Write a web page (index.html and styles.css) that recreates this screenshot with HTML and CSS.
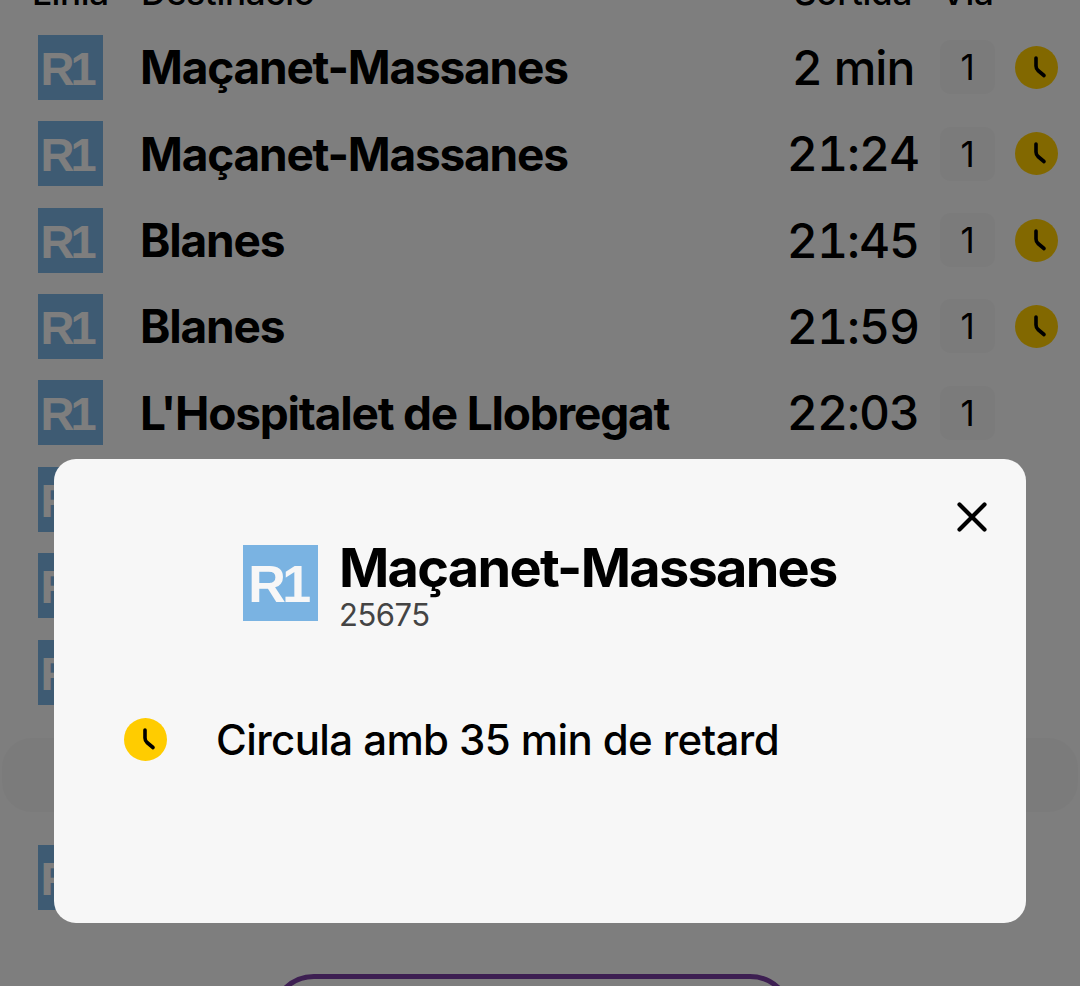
FILE: index.html
```html
<!DOCTYPE html>
<html lang="ca">
  <head>
    <meta charset="UTF-8" />
    <meta name="viewport" content="width=device-width, initial-scale=1.0" />
    <title>Sortides</title>
    <link rel="stylesheet" href="styles.css">
  </head>
  <body>
    <div id="container">
      <div id="head">
        <span class="col-line">Línia</span>
        <span class="col-dest">Destinació</span>
        <span class="col-time">Sortida</span>
        <span class="col-via">Via</span>
      </div>
      <div class="rows">
        <div class="row">
          <div class="badge">R1</div>
          <div class="dest">Maçanet-Massanes</div>
          <div class="time">2 min</div>
          <div class="via">1</div>
          <svg class="clock" viewBox="0 0 43 43"><circle cx="21.5" cy="21.5" r="21.5" fill="#ffcc00"/><path d="M21 12v8q0 2.5 2 4.5l6 5" fill="none" stroke="#000" stroke-width="3.6" stroke-linecap="round" stroke-linejoin="round"/></svg>
        </div>
        <div class="row">
          <div class="badge">R1</div>
          <div class="dest">Maçanet-Massanes</div>
          <div class="time">21:24</div>
          <div class="via">1</div>
          <svg class="clock" viewBox="0 0 43 43"><circle cx="21.5" cy="21.5" r="21.5" fill="#ffcc00"/><path d="M21 12v8q0 2.5 2 4.5l6 5" fill="none" stroke="#000" stroke-width="3.6" stroke-linecap="round" stroke-linejoin="round"/></svg>
        </div>
        <div class="row">
          <div class="badge">R1</div>
          <div class="dest">Blanes</div>
          <div class="time">21:45</div>
          <div class="via">1</div>
          <svg class="clock" viewBox="0 0 43 43"><circle cx="21.5" cy="21.5" r="21.5" fill="#ffcc00"/><path d="M21 12v8q0 2.5 2 4.5l6 5" fill="none" stroke="#000" stroke-width="3.6" stroke-linecap="round" stroke-linejoin="round"/></svg>
        </div>
        <div class="row">
          <div class="badge">R1</div>
          <div class="dest">Blanes</div>
          <div class="time">21:59</div>
          <div class="via">1</div>
          <svg class="clock" viewBox="0 0 43 43"><circle cx="21.5" cy="21.5" r="21.5" fill="#ffcc00"/><path d="M21 12v8q0 2.5 2 4.5l6 5" fill="none" stroke="#000" stroke-width="3.6" stroke-linecap="round" stroke-linejoin="round"/></svg>
        </div>
        <div class="row">
          <div class="badge">R1</div>
          <div class="dest">L'Hospitalet de Llobregat</div>
          <div class="time">22:03</div>
          <div class="via">1</div>
        </div>
        <div class="row"><div class="badge">R1</div></div>
        <div class="row"><div class="badge">R1</div></div>
        <div class="row"><div class="badge">R1</div></div>
      </div>
      <div id="notice"></div>
      <div class="rows">
        <div class="row"><div class="badge">R1</div></div>
      </div>
      <div id="more"></div>
    </div>

    <div id="overlay">
      <div id="modal">
        <svg id="close" viewBox="0 0 30 30"><path d="M2.5 2.5l25 25M27.5 2.5l-25 25" fill="none" stroke="#000" stroke-width="4.2" stroke-linecap="round"/></svg>
        <div class="modal-head">
          <div class="badge badge-big">R1</div>
          <div>
            <div class="modal-title">Maçanet-Massanes</div>
            <div class="modal-code">25675</div>
          </div>
        </div>
        <div class="modal-msg">
          <svg class="clock" viewBox="0 0 43 43"><circle cx="21.5" cy="21.5" r="21.5" fill="#ffcc00"/><path d="M21 12v8q0 2.5 2 4.5l6 5" fill="none" stroke="#000" stroke-width="3.6" stroke-linecap="round" stroke-linejoin="round"/></svg>
          <span>Circula amb 35 min de retard</span>
        </div>
      </div>
    </div>
  </body>
</html>
```

FILE: styles.css
```css
html {
  box-sizing: border-box;
}
body {
  font-family: Inter, "Liberation Sans", Arial, sans-serif;
  margin: 0;
  padding: 0;
  height: 986px;
  overflow: hidden;
  background-color: #f7f7f7;
  color: #000;
}
#container {
  height: 986px;
  overflow: hidden;
}
#head {
  display: flex;
  height: 40px;
  margin-top: -28px;
  margin-bottom: 22.8px;
  font-size: 35px;
  font-weight: 500;
  line-height: 40px;
  letter-spacing: -0.3px;
}
.col-line {
  width: 109px;
  margin-left: 32px;
}
.col-dest {
  width: 653px;
}
.col-time {
  width: 147px;
}
.rows {
  display: flex;
  flex-direction: column;
  gap: 21.4px;
}
.row {
  display: flex;
  align-items: center;
  height: 65px;
  padding-left: 38px;
}
.badge {
  width: 65px;
  height: 65px;
  flex-shrink: 0;
  padding-right: 8px;
  box-sizing: border-box;
  background-color: #7ab3e2;
  color: #f7f7f7;
  font-family: "Liberation Sans", Arial, sans-serif;
  font-size: 47px;
  font-weight: bold;
  letter-spacing: -4px;
  line-height: 68px;
  text-align: center;
}
.dest {
  width: 628px;
  margin-left: 37px;
  font-size: 46px;
  font-weight: 700;
  letter-spacing: -1.2px;
  white-space: nowrap;
}
.time {
  width: 170px;
  margin-right: 1px;
  flex-shrink: 0;
  font-size: 48px;
  font-weight: 500;
  font-feature-settings: "tnum";
  letter-spacing: -1px;
  text-align: center;
}
.via {
  width: 55px;
  height: 54px;
  margin-left: 1px;
  border-radius: 11px;
  background-color: #f1f1f1;
  font-size: 35px;
  font-weight: 400;
  line-height: 54px;
  text-align: center;
}
.row .clock {
  margin-left: 20px;
}
.clock {
  width: 43px;
  height: 43px;
  flex-shrink: 0;
}
#notice {
  height: 74px;
  margin: 33px 2px;
  border-radius: 30px;
  background-color: #f2f2f2;
}
#more {
  width: 524px;
  height: 100px;
  margin: 64px 0 0 270px;
  box-sizing: border-box;
  border: 5px solid #783da1;
  border-radius: 44px;
}
#overlay {
  position: fixed;
  top: 0;
  left: 0;
  width: 1080px;
  height: 986px;
  background-color: rgba(0, 0, 0, 0.49);
}
#modal {
  position: relative;
  width: 972px;
  height: 464px;
  margin: 459px 0 0 54px;
  box-sizing: border-box;
  padding-top: 86px;
  border-radius: 22px;
  background-color: #f7f7f7;
}
#close {
  position: absolute;
  top: 43px;
  right: 39px;
  width: 30px;
  height: 30px;
}
.modal-head {
  display: flex;
  gap: 21px;
  padding-left: 189px;
}
.badge-big {
  width: 75px;
  height: 76px;
  padding-right: 5px;
  font-size: 52px;
  letter-spacing: -3.5px;
  line-height: 78px;
}
.modal-title {
  margin-top: -4px;
  font-size: 54px;
  font-weight: 700;
  letter-spacing: -1.7px;
  line-height: 54px;
}
.modal-code {
  margin-top: 2px;
  font-size: 31px;
  line-height: 36px;
  letter-spacing: -0.5px;
  color: #444;
}
.modal-msg {
  display: flex;
  align-items: center;
  gap: 49px;
  margin-top: 81px;
  padding-left: 70px;
  font-size: 42px;
  font-weight: 500;
  letter-spacing: -0.6px;
}
```
